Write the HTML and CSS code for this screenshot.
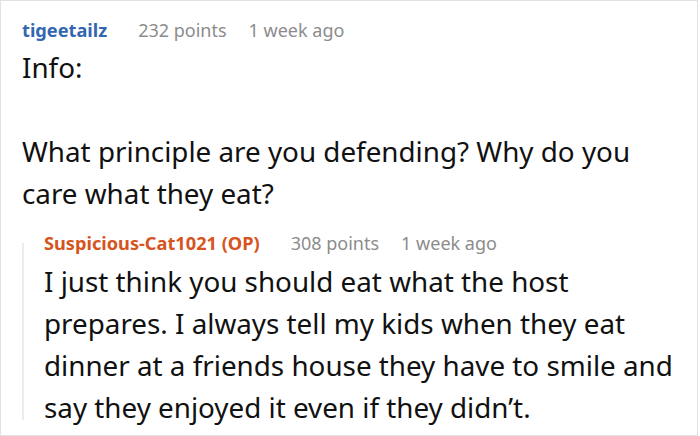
FILE: index.html
```html
<!DOCTYPE html>
<html>
<head>
<meta charset="utf-8">
<link rel="stylesheet" href="styles.css">
</head>
<body>
<div class="frame">
  <div class="comment">
    <div class="meta">
      <span class="user">tigeetailz</span>
      <span class="info">232 points</span>
      <span class="info">1 week ago</span>
    </div>
    <div class="body">
      <p>Info:</p>
      <p>&nbsp;</p>
      <p>What principle are you defending? Why do you care what they eat?</p>
    </div>
    <div class="reply">
      <div class="meta">
        <span class="user op">Suspicious-Cat1021 (OP)</span>
        <span class="info">308 points</span>
        <span class="info">1 week ago</span>
      </div>
      <div class="body">
        <p>I just think you should eat what the host prepares. I always tell my kids when they eat dinner at a friends house they have to smile and say they enjoyed it even if they didn’t.</p>
      </div>
    </div>
  </div>
</div>
</body>
</html>
```
FILE: styles.css
```css
html, body {
  margin: 0;
  padding: 0;
  background: #fff;
}
.frame {
  width: 696px;
  height: 434px;
  border: 1px solid #e2e2e2;
  overflow: hidden;
  font-family: "Noto Sans", "Open Sans", sans-serif;
  color: #111;
}
.comment {
  padding: 17px 16px 0 21px;
}
.meta {
  display: flex;
  align-items: baseline;
  gap: 22px;
  font-size: 18px;
  line-height: 24px;
  margin-bottom: 4px;
}
.user {
  font-size: 18.2px;
  font-weight: bold;
  color: #3366b0;
  margin-right: 9px;
}
.user.op {
  color: #d6541e;
}
.info {
  color: #8c8c8c;
}
.body {
  font-size: 27.8px;
  line-height: 42px;
}
.body p {
  margin: 0;
}
.reply {
  position: relative;
  margin-top: 17px;
  padding-left: 22px;
}
.reply .meta {
  margin-bottom: 5px;
}
.reply::before {
  content: "";
  position: absolute;
  left: 0;
  top: 12px;
  bottom: 8px;
  width: 2px;
  background: #ececec;
}
```
